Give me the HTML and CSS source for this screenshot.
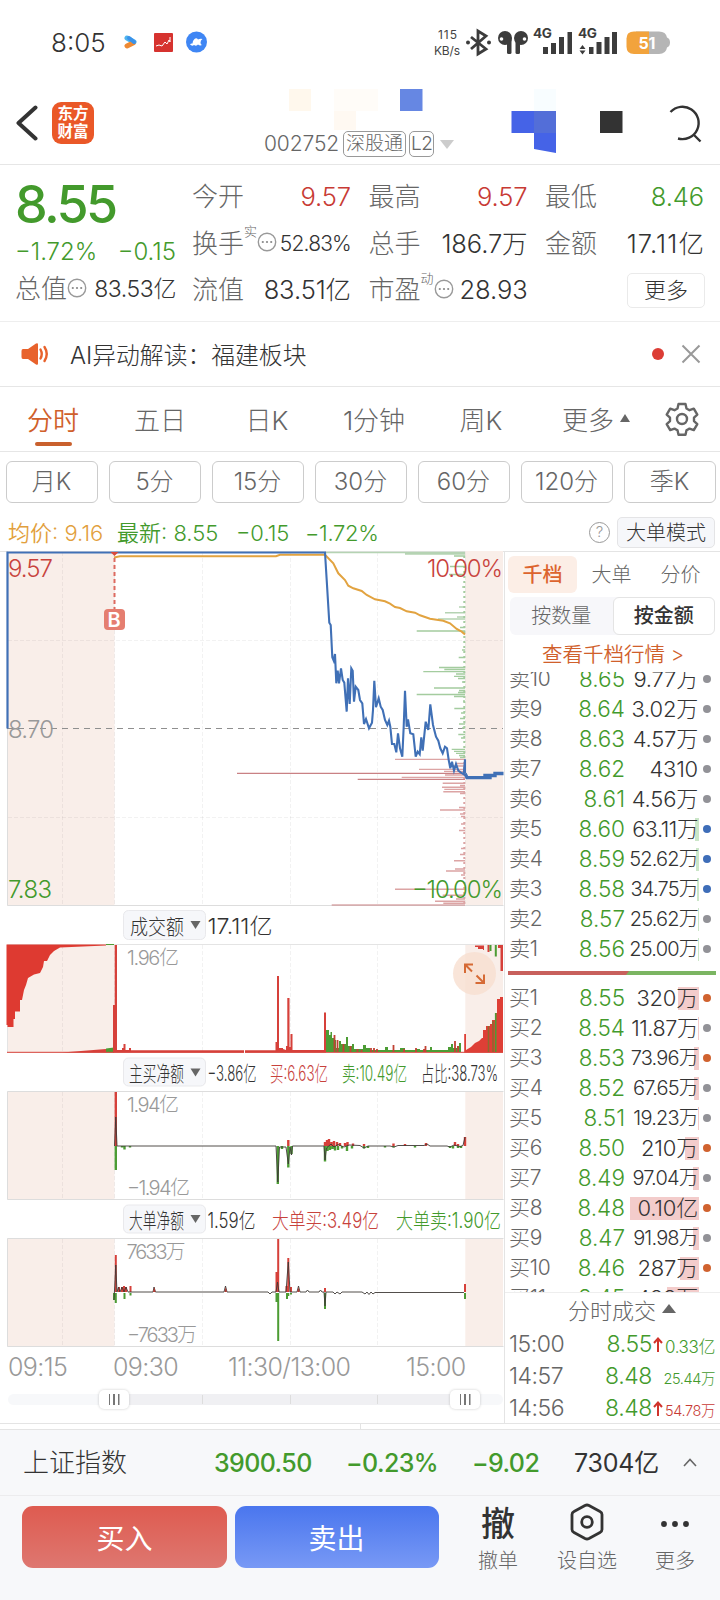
FILE: index.html
```
<!DOCTYPE html>
<html lang="zh-CN">
<head>
    <meta charset="UTF-8">
    <meta name="viewport" content="width=device-width, initial-scale=1.0">
    <title>002752 分时</title>
    <link rel="stylesheet" href="styles.css">
</head>
<body>
<div class="page">

    <div class="status-bar">
        <span class="clock">8:05</span>
        <svg class="status-left" width="90" height="24" viewBox="120 30 90 24">
            <path d="M127 38l7 4" stroke="#4fb4ee" stroke-width="5" stroke-linecap="round"/>
            <path d="M127 46l6-3" stroke="#ee8a34" stroke-width="5" stroke-linecap="round"/>
            <path d="M129 38l5 4" stroke="#3a92ea" stroke-width="4" stroke-linecap="round"/>
            <rect x="154" y="33" width="19" height="19" rx="1" fill="#d6332f"/>
            <path d="M156 46l3-1 3 1 3-4 2 2 2-4 1 2V37" fill="none" stroke="#fff" stroke-width="1"/>
            <circle cx="196.500" cy="42" r="10.500" fill="#3f86f4"/>
            <path d="M190 44.500q1-1.500 2.500-1 0-3 2-4.500 2-1.500 3.500.5 2-1 4.500-.5-2 1-2 3.500 0 2 1.500 2.500-2 1-4-.5-1.500 2-4 .5-2 1.500-4-.5z" fill="#fff"/>
        </svg>
        <svg class="status-right" width="240" height="34" viewBox="430 24 240 34">
            <g class="net-speed"><text x="438" y="38" textLength="19">115</text><text x="434" y="54" textLength="26">KB/s</text></g>
            <path d="M471 36l15 12-8 5V30l8 5-15 13" fill="none" stroke="#3c3c3c" stroke-width="2.800"/>
            <circle cx="468" cy="41.500" r="2" fill="#3c3c3c"/><circle cx="489" cy="41.500" r="2" fill="#3c3c3c"/>
            <g fill="#3c3c3c">
                <circle cx="505" cy="37" r="7"/><rect x="507" y="36" width="4.500" height="17" rx="1.500"/>
                <circle cx="521" cy="37" r="7"/><rect x="515.500" y="36" width="4.500" height="17" rx="1.500"/>
                <rect x="543" y="46" width="5" height="7"/><rect x="551" y="42" width="5" height="11"/><rect x="559" y="36" width="5" height="17"/><rect x="567.500" y="31" width="4.500" height="22"/>
                <path d="M579.500 48l3-4 3 4zM579.500 49.500l3 4 3-4z"/>
                <rect x="589" y="46" width="4.500" height="7"/><rect x="596.500" y="41" width="5" height="12"/><rect x="604.500" y="36" width="5" height="17"/><rect x="612" y="31" width="5" height="22"/>
            </g>
            <circle cx="501.500" cy="38" r="1.800" fill="#fff"/><circle cx="524.500" cy="38" r="1.800" fill="#fff"/>
            <g class="net-type"><text x="533" y="37" textLength="19">4G</text><text x="578" y="37" textLength="19">4G</text></g>
            <path d="M636 30.500h23q7 0 8 6 3 1 3 5t-3 5q-1 6.500-8 6.500h-23z" fill="#b5b5b5"/>
            <path d="M649 30.500h-15q-7.500 0-7.500 7v8q0 7.500 7.500 7.500h15z" fill="#f2a33c"/>
            <text class="battery" x="638.500" y="48" textLength="17">51</text>
        </svg>
    </div>

    <div class="top-bar">
        <svg class="back" width="24" height="36" viewBox="0 0 24 36"><path d="M20.500 2.500L3.500 18l17 15.500" fill="none" stroke="#333" stroke-width="4" stroke-linecap="round" stroke-linejoin="round"/></svg>
        <div class="logo">东方<br>财富</div>
        <!-- masked name and toolbar blocks -->
        <svg class="mosaic" width="360" height="70" viewBox="280 85 360 70">
            <rect x="289" y="89" width="22" height="22" fill="#fff8ed"/>
            <rect x="334" y="89" width="44" height="22" fill="#fffcf8"/>
            <rect x="334" y="111" width="22" height="19" fill="#fff9f2"/>
            <rect x="534" y="89" width="22" height="22" fill="#f8fdff"/>
            <rect x="400" y="89" width="22.500" height="22" fill="#6687e3"/>
            <rect x="511.500" y="111" width="22.500" height="22" fill="#4563e7"/>
            <rect x="534" y="111" width="22" height="22" fill="#536ed8"/>
            <path d="M534 133h22v20l-22-4z" fill="#4563e7"/>
            <rect x="600" y="111" width="22.500" height="22" fill="#333"/>
        </svg>
        <div class="stock-code">
            <span>002752</span><span class="tag">深股通</span><span class="tag l2">L2</span>
            <svg width="14" height="9" viewBox="0 0 14 9"><path d="M0 0h14L7 9z" fill="#ccc"/></svg>
        </div>
        <svg class="search" width="36" height="40" viewBox="666 101 36 40"><path d="M670.500 110a16.200 16.200 0 1 1 7.500 26.500M693 132l7.500 7.500" fill="none" stroke="#333" stroke-width="2.400"/></svg>
    </div>

    <div class="quote">
        <div class="quote-main">
            <div class="last">8.55</div>
            <div class="change"><span>−1.72%</span><span>−0.15</span></div>
            <div class="cell"><i>总值</i><svg class="dots" viewBox="0 0 20 20"><use href="#more-dots"/></svg><b class="small cap">83.53亿</b></div>
        </div>
        <div class="quote-grid">
            <div class="cell"><i>今开</i><b class="red">9.57</b></div>
            <div class="cell"><i>最高</i><b class="red">9.57</b></div>
            <div class="cell"><i>最低</i><b class="green">8.46</b></div>
            <div class="cell"><i>换手</i><sup>实</sup><svg class="dots" viewBox="0 0 20 20"><use href="#more-dots"/></svg><b class="small">52.83%</b></div>
            <div class="cell"><i>总手</i><b>186.7万</b></div>
            <div class="cell"><i>金额</i><b class="wide">17.11亿</b></div>
            <div class="cell"><i>流值</i><b>83.51亿</b></div>
            <div class="cell"><i>市盈</i><sup>动</sup><svg class="dots" viewBox="0 0 20 20"><use href="#more-dots"/></svg><b>28.93</b></div>
            <div class="cell"><button class="more-btn">更多</button></div>
        </div>
    </div>

    <div class="notice">
        <svg width="30" height="24" viewBox="0 0 30 24">
            <path d="M2 7h5l8-5.500q2-1 2 1v19q0 2-2 1L7 17H2q-1.500 0-1.500-2V9q0-2 1.500-2z" fill="#e8622c"/>
            <path d="M19.500 7.500q2.500 4.500 0 9M23.500 5q4.500 7 0 14" fill="none" stroke="#e8622c" stroke-width="2.400" stroke-linecap="round"/>
        </svg>
        <span class="notice-text">AI异动解读：福建板块</span>
        <span class="red-dot"></span>
        <svg width="20" height="20" viewBox="0 0 20 20"><path d="M1.500 1.500l17 17M18.500 1.500l-17 17" stroke="#999" stroke-width="2"/></svg>
    </div>

    <div class="tabs">
        <span class="tab active">分时</span>
        <span class="tab">五日</span>
        <span class="tab">日K</span>
        <span class="tab">1分钟</span>
        <span class="tab">周K</span>
        <span class="tab">更多<svg width="10" height="8" viewBox="0 0 10 8"><path d="M0 8h10L5 0z" fill="#666"/></svg></span>
        <span class="gear">
            <svg width="34" height="34" viewBox="0 0 34 34" fill="none" stroke="#666" stroke-width="2.400" stroke-linejoin="round">
                <path d="M13.500 2h7l1 4.500 3 1.700 4.300-1.500 3.500 6-3.300 3v3.400l3.300 3-3.500 6-4.300-1.500-3 1.700-1 4.500h-7l-1-4.500-3-1.700-4.300 1.500-3.500-6 3.300-3v-3.400l-3.300-3 3.500-6L9.500 8.200l3-1.700z"/>
                <circle cx="17" cy="17" r="5"/>
            </svg>
        </span>
    </div>

    <div class="periods">
        <button>月K</button>
        <button>5分</button>
        <button>15分</button>
        <button>30分</button>
        <button>60分</button>
        <button>120分</button>
        <button>季K</button>
    </div>

    <div class="summary">
        <span class="avg">均价: 9.16</span>
        <span class="green now">最新: 8.55</span>
        <span class="green d1">−0.15</span>
        <span class="green d2">−1.72%</span>
        <span class="help">?</span>
        <button class="mode-btn">大单模式</button>
    </div>

    <div class="content">
        <div class="charts">

            <!-- price -->
            <svg width="504" height="355" viewBox="0 551 504 355">
                <path d="M7.500 551H114.500V906H7.500zM465.300 551H503V906H465.300z" fill="#f9eee9"/>
                <path class="grid" d="M62.500 552V905M114.500 552V905M202.500 552V905M290.500 552V905M377.500 552V905M465.500 552V905M8 640.500H503M8 817.500H503"/>
                <path d="M7.500 551V905.500H503.500" fill="none" stroke="#ddd"/>
                <path d="M7 728.500H503" stroke="#8f8f8f" stroke-dasharray="6 5"/>
                <text class="up-text" font-size="24" x="8" y="577" textLength="45">9.57</text>
                <text class="gray" font-size="24" x="8" y="738" textLength="46">8.70</text>
                <text class="down-text" font-size="24" x="8" y="898" textLength="44">7.83</text>
                <path d="M325 552.500H465M405 554H465M445 612.700H465M438 619H465M457 617H465M459 607H465M462 587H465" stroke="#b5d3b3" stroke-width="1.500"/>
                <path d="M454 556H465M450 566.500H465M449 574.500H465M416.700 631H465M460 627.500H465M462 650H465M458.700 657.500H465M439 667.500H465M444.300 669.500H465M423.300 671.700H465M456 674H465M454 676.300H465M458 678.500H465M462 682H465M434 688H465M459 690.500H465M458 692.500H465M416.700 694.500H465M454 696.500H465M463 701H465M454.300 708.500H465M461 713H465M460 718.500H465M459 724H465M462 728H465M458.300 734.500H465M461 738H465M451.700 749.300H465M454 751.300H465M456 753.300H465M459 755.500H465M460 757.500H465" stroke="#a4cc9f" stroke-width="1.300"/>
                <path d="M464.300 556V759" stroke="#a4cc9f" stroke-width="2" stroke-dasharray="2 3"/>
                <path d="M395 759.400H465M455 763.500H465M449 766H465M419 769.400H465M444 771.400H465M445 775H465M401.700 777.400H465M442.700 783.300H465M460 785.500H465M442 787.300H465M444.300 789.400H465M443.300 791.700H465M460 793.500H465M459 807.500H465M440 810H465M460 814H465M461 816.500H465M461 824H465M459 830.500H465M461 848.500H465M460 854.500H465M454 860.700H465M455 869H465M446 871H465M461 875H465M395 889.300H465M442.700 895.300H465M456 899H465M435 901.300H465M443.300 903.300H465" stroke="#dca4a4" stroke-width="1.400"/>
                <path d="M464.300 762V905" stroke="#dca4a4" stroke-width="2" stroke-dasharray="2 3"/>
                <path d="M237 773.400H465M357.700 779.400H465M331.700 905H465" stroke="#c98184" stroke-width="1.200"/>
                <path d="M114 557.500L120 556.300L276 556.300L280 554.700H325L333.300 563.300L338.300 573.300L345 580L348.300 585.700L353.300 588.300L361.700 591L366.700 595L375 599.300L385 601.300L390 603.700L395 607L400 608L406.700 611.300L415 612.700L420 615.300L430 618.700L443.300 620.700L450 623.300L456.700 629L461.700 631.700L465 634.500" fill="none" stroke="#e2a340" stroke-width="2"/>
                <path d="M114 552.500H325L326.700 580L329.300 622.700L330.700 625L332.300 657.300L333.700 660.700L335 654L336.300 683.300L337.700 670.700L339 683.300L341 668.300L342.700 680L344.300 682.700L346.700 711.700L348 678.300L349.700 704L351.300 668.300L352.700 670.700L354 701.700L355.700 686.700L358.300 690L360 700L362.300 703.300L364 724L366 719L369 728.300L372 722.700L373 710L374.300 680.700L376 707.300L378.700 698.300L380.700 706.700L382.700 710L385 720L387.300 725L389 720.700L390.300 726.700L392 744H394.300L396.300 752.300L398 733.300L400 748.300L402.300 756.700L403.700 726.700L405 690.700L406.700 726.700L408 719.300L410.300 733.300L413.300 734.300L415.700 756.700L417.700 751.700L419.700 754.300L421.300 737.300L422.700 750.700L425.700 721.700L428.300 730L430.300 704.300L433 725L436 736.700L438.300 740.700L440.300 748.300L442.700 753.300L445 746.700L447 748.300L448.700 760L450.300 768.300L452 761.700L454 770.700L456 764L458.300 770.700L461 772.700L463.700 774.300L465 759.300V773.300" fill="none" stroke="#4070b6" stroke-width="2.100"/>
                <path d="M7.500 728.500V552.500H114" fill="none" stroke="#4070b6" stroke-width="2.200"/>
                <path d="M465 773.500L467 777.600H485V775.500H487V777.600H490V775.500H495V773.500H503.500" fill="none" stroke="#4070b6" stroke-width="3.400"/>
                <path d="M110.500 552h8l-4 4z" fill="#d84a3c"/>
                <path d="M114.500 558V609" stroke="#dd6a60" stroke-width="2" stroke-dasharray="4 3"/>
                <rect x="104" y="609" width="21" height="21" rx="4" fill="#e57e70"/>
                <text class="mark" x="107.500" y="626.500" textLength="14">B</text>
                <text class="up-text" font-size="24" x="427" y="577" textLength="76">10.00%</text>
                <text class="down-text" font-size="24" x="412" y="898" textLength="91">−10.00%</text>
            </svg>

            <!-- turnover -->
            <svg width="504" height="147" viewBox="0 906 504 147">
                <rect class="picker" x="123.500" y="910.500" width="82" height="29" rx="5"/>
                <text x="130" y="934" font-size="21" textLength="54" lengthAdjust="spacingAndGlyphs">成交额</text>
                <path d="M190.500 921h10l-5 8z" fill="#666"/>
                <text x="207.500" y="934" font-size="22" textLength="65" lengthAdjust="spacingAndGlyphs">17.11亿</text>
                <path d="M7.500 944H114.500V1053H7.500zM465.300 944H503V1053H465.300z" fill="#f9eee9"/>
                <path class="grid" d="M62.500 945V1052M114.500 945V1052M202.500 945V1052M290.500 945V1052M377.500 945V1052"/>
                <path d="M7.500 1052.500V944.500H503.500" fill="none" stroke="#e4e4e4"/>
                <path d="M6.500 944.500H106V945.500L60 947.500L54 951L50 955L47 961H44L43 967L40 973L34 974.500L28 978L26 985L24 990L22 1000H20V1011.500H15V1019H13.500V1027H7.500V1025H6.500z" fill="#de3a31"/>
                <path d="M106 944.500H114" stroke="#4c9c34"/>
                <path d="M62 1052.500L106 1049V1052.500z" fill="#d6403a"/>
                <path d="M106 1048.500L114 1047.500V1052.500H106z" fill="#4c9c34"/>
                <path d="M7 1052.300H503" stroke="#d6403a"/>
                <path d="M113 1005H114.700V945H117V1050H122V1048H123.500V1044H125.500V1050H129V1048H131V1050.200H275.500V1042H277V976H279V1048H283V1049L286 1050V1046H287.300V998H289.500V1047H290.500V1034H292.500V1050H324V1012.500H326V1052.500H113z" fill="#d6403a"/>
                <path d="M244.500 1049V1053" stroke="#fff"/>
                <path d="M326 1030H329V1035H330.500V1032H332V1038H334V1040H336V1048H339V1041H341V1044H346V1037H348V1046H352V1044H354V1049H363V1045H366V1048H370V1050H385V1047H388V1050H400V1048H405V1050H416V1049H420V1050H430V1047H432V1050H448V1047H451V1044H453V1048H457V1046H459V1043H461V1052H326z" fill="#4c9c34"/>
                <path d="M334.500 1035V1052M337.500 1040V1052M343.500 1044V1052M350.500 1046V1052M357.500 1049V1052M361.500 1050V1052M371 1048V1052M374 1048V1052M377 1049V1052M393.500 1045V1052M404 1049V1052M416 1048V1052M424 1049V1052M425.500 1046V1052M455 1041V1052M458 1046V1052" stroke="#c14234" stroke-width="1.800"/>
                <path d="M464.200 1034H466V1050L471 1047L475 1043L479 1041L482 1038H483V1030H486V1026H490V1024H492V1020H495V1013H497V999H500V997H503V1052.500H464.200z" fill="#de3f36"/>
                <path d="M495.700 1013V1052" stroke="#4c9c34" stroke-width="1.600"/>
                <path d="M488.500 1026V1052M493 1021V1052" stroke="#8d6a2d" stroke-width="1.500"/>
                <path d="M471 945.500H475V947H478V949H483V950H484V945.500M487.500 945H489.500V952H487.500zM500.500 945H503V971H500.500zM498 945H503V948H498z" fill="#d6403a"/>
                <path d="M490.500 945V951M495.800 945V956.500" stroke="#4c9c34" stroke-width="2"/>
                <text class="gray" font-size="20" x="127" y="964.500" textLength="52">1.96亿</text>
                <circle cx="474.500" cy="973.400" r="21.500" fill="#f8dfd0" opacity=".8"/>
                <path d="M465 973V964.500H473M465 964.500L472 971.500M484 974.500V983H475.500M484 983L476.500 975.500" fill="none" stroke="#d66a35" stroke-width="2"/>
            </svg>

            <!-- net active buying -->
            <svg width="504" height="147" viewBox="0 1053 504 147">
                <rect class="picker" x="123.500" y="1058" width="82" height="28" rx="5"/>
                <text x="129" y="1081" font-size="21" textLength="55" lengthAdjust="spacingAndGlyphs">主买净额</text>
                <path d="M190.500 1068.500h10l-5 8z" fill="#666"/>
                <text x="207.500" y="1081" font-size="21" textLength="49" lengthAdjust="spacingAndGlyphs">−3.86亿</text>
                <text class="up-text" x="270" y="1081" font-size="21" textLength="58" lengthAdjust="spacingAndGlyphs">买:6.63亿</text>
                <text class="down-text" x="342" y="1081" font-size="21" textLength="65" lengthAdjust="spacingAndGlyphs">卖:10.49亿</text>
                <text x="421" y="1081" font-size="21" textLength="77" lengthAdjust="spacingAndGlyphs">占比:38.73%</text>
                <path d="M7.500 1091H114.500V1200H7.500zM465.300 1091H503V1200H465.300z" fill="#f9eee9"/>
                <path class="grid" d="M62.500 1092V1199M114.500 1092V1199M202.500 1092V1199M290.500 1092V1199M377.500 1092V1199"/>
                <path d="M503.500 1091.500H7.500V1199.500H503.500" fill="none" stroke="#ddd"/>
                <path d="M115.800 1092V1146M288.300 1140V1146M325 1142V1146M327 1140V1146M329 1139V1146M331.500 1142V1146M334 1141V1146M337 1142V1146M340 1143V1146M345 1143V1146M347.500 1142V1146M353 1143.500V1146M364 1144V1146M393.500 1143.500V1146M405 1144V1146M426 1143V1146M455 1142V1146M458 1144V1146M465 1137V1146" stroke="#d6403a" stroke-width="2.400"/>
                <path d="M115.800 1146V1170M122 1146V1147.500M124.500 1146V1149.500M130 1146V1147.500M277.800 1146V1184M282 1146V1149M288.300 1146V1167.500M291.500 1146V1154M325 1146V1161.500M327.500 1146V1151M330 1146V1150M332.500 1146V1149M335 1146V1150.500M338 1146V1150M342 1146V1148.500M347 1146V1151M352 1146V1148.500M364 1146V1148.500M368 1146V1148M385 1146V1147.500M393.500 1146V1147.500M415 1146V1147.500M450 1146V1148M453 1146V1148.500M458 1146V1148M461 1146V1148" stroke="#4c9c34" stroke-width="2.400"/>
                <path d="M114.500 1146L115.800 1117L117 1146H276L277.800 1182L279.500 1147H286L288.300 1164L290 1147L291.500 1155L292.500 1146H324L325 1160L326.500 1148L331 1144L334 1147L338 1144.500L344 1147L349 1145L360 1145.500L364 1148L368 1146H390L394 1147L398 1145.500H424L427 1144L430 1146H447L450 1147L454 1145L460 1146.500L463 1145.500L465 1137" fill="none" stroke="#3e3a37" stroke-width=".9"/>
                <text class="gray" font-size="20" x="127" y="1112" textLength="52">1.94亿</text>
                <text class="gray" font-size="20" x="127" y="1195" textLength="63">−1.94亿</text>
            </svg>

            <!-- net big orders -->
            <svg width="504" height="148" viewBox="0 1200 504 148">
                <rect class="picker" x="123.500" y="1205" width="82" height="28" rx="5"/>
                <text x="129" y="1228" font-size="21" textLength="55" lengthAdjust="spacingAndGlyphs">大单净额</text>
                <path d="M190.500 1215h10l-5 8z" fill="#666"/>
                <text x="207.500" y="1228" font-size="21" textLength="48" lengthAdjust="spacingAndGlyphs">1.59亿</text>
                <text class="up-text" x="272" y="1228" font-size="21" textLength="107" lengthAdjust="spacingAndGlyphs">大单买:3.49亿</text>
                <text class="down-text" x="396" y="1228" font-size="21" textLength="105" lengthAdjust="spacingAndGlyphs">大单卖:1.90亿</text>
                <path d="M7.500 1238H114.500V1347H7.500zM465.300 1238H503V1347H465.300z" fill="#f9eee9"/>
                <path class="grid" d="M62.500 1239V1346M114.500 1239V1346M202.500 1239V1346M290.500 1239V1346M377.500 1239V1346"/>
                <path d="M503.500 1238.500H7.500V1346.500H503.500" fill="none" stroke="#ddd"/>
                <path d="M115.800 1255V1292M119 1287V1292M122 1287V1292M124 1286V1292M126 1287V1292M130.500 1286V1292M276.500 1272V1292M278.200 1239V1292M286.500 1286V1292M288.300 1258V1292M291 1287V1292M325 1288V1292M465 1284V1292" stroke="#d6403a" stroke-width="2"/>
                <path d="M114 1293V1300M115.800 1293V1303M124.500 1293V1299M130.500 1293V1295.500M276.500 1293V1302M278.200 1293V1341M287 1293V1299M288.300 1293V1296M291 1293V1294.500M325 1293V1309M465 1293V1299" stroke="#4c9c34" stroke-width="2"/>
                <path d="M114 1300L115.800 1265L117 1292L118.500 1287L120 1292L122 1287L124 1292L126 1287L128 1292H153L154 1287L155.500 1292H224L225.500 1286L227 1292H268L270 1294L272 1292H276L277.500 1282L279 1292H286L288.300 1262L290 1292H297L298.500 1286L300 1292H306L307.500 1290L309 1292H319L320.500 1290L322 1292H324L325 1306L326 1292H333L335 1294L337 1292L340 1294L342 1292H362L365 1294L367 1292L369 1294.500L371 1292L373 1294L375 1292.500H464" fill="none" stroke="#3e3a37" stroke-width=".9"/>
                <path d="M153 1292l1.300-5 1.300 5zM224.500 1292l1.200-5 1.200 5zM297.300 1292l1.200-5 1.200 5z" fill="#b23a33"/>
                <text class="gray" font-size="20" x="126.500" y="1259" textLength="59">7633万</text>
                <text class="gray" font-size="20" x="127" y="1341.500" textLength="70">−7633万</text>
            </svg>

            <div class="time-axis">
                <span>09:15</span><span>09:30</span><span>11:30/13:00</span><span>15:00</span>
            </div>
            <div class="range">
                <span class="handle"></span>
                <span class="tick t1"></span><span class="tick t2"></span><span class="tick t3"></span>
                <span class="handle"></span>
            </div>
        </div>

        <div class="side">
            <div class="side-tabs"><span class="on">千档</span><span>大单</span><span>分价</span></div>
            <div class="segment"><span>按数量</span><span class="on">按金额</span></div>
            <div class="depth-link">查看千档行情 &gt;</div>

            <div class="book sell">
                <div class="row"><i>卖10</i><b>8.65</b><em>9.77万</em><u></u></div>
                <div class="row"><i>卖9</i><b>8.64</b><em>3.02万</em><u></u></div>
                <div class="row"><i>卖8</i><b>8.63</b><em>4.57万</em><u></u></div>
                <div class="row"><i>卖7</i><b>8.62</b><em>4310</em><u></u></div>
                <div class="row"><i>卖6</i><b>8.61</b><em>4.56万</em><u></u></div>
                <div class="row"><i>卖5</i><b>8.60</b><em class="mid" style="--w: 4px">63.11万</em><u class="blue"></u></div>
                <div class="row"><i>卖4</i><b>8.59</b><em class="long" style="--w: 3px">52.62万</em><u class="blue"></u></div>
                <div class="row"><i>卖3</i><b>8.58</b><em class="long" style="--w: 2px">34.75万</em><u class="blue"></u></div>
                <div class="row"><i>卖2</i><b>8.57</b><em class="long" style="--w: 1px">25.62万</em><u></u></div>
                <div class="row"><i>卖1</i><b>8.56</b><em class="long" style="--w: 1px">25.00万</em><u></u></div>
            </div>
            <div class="ratio"><span></span></div>
            <div class="book buy">
                <div class="row"><i>买1</i><b>8.55</b><em style="--w: 21px">320万</em><u class="orange"></u></div>
                <div class="row"><i>买2</i><b>8.54</b><em class="mid" style="--w: 1px">11.87万</em><u></u></div>
                <div class="row"><i>买3</i><b>8.53</b><em class="long" style="--w: 5px">73.96万</em><u class="orange"></u></div>
                <div class="row"><i>买4</i><b>8.52</b><em class="long" style="--w: 5px">67.65万</em><u></u></div>
                <div class="row"><i>买5</i><b>8.51</b><em class="long" style="--w: 1px">19.23万</em><u></u></div>
                <div class="row"><i>买6</i><b>8.50</b><em style="--w: 14px">210万</em><u class="orange"></u></div>
                <div class="row"><i>买7</i><b>8.49</b><em class="long" style="--w: 6px">97.04万</em><u></u></div>
                <div class="row"><i>买8</i><b>8.48</b><em style="--w: 69px">0.10亿</em><u class="orange"></u></div>
                <div class="row"><i>买9</i><b>8.47</b><em class="long" style="--w: 6px">91.98万</em><u></u></div>
                <div class="row"><i>买10</i><b>8.46</b><em style="--w: 19px">287万</em><u class="orange"></u></div>
                <div class="row"><i>买11</i><b>8.45</b><em style="--w: 32px">483万</em><u></u></div>
            </div>

            <div class="trades">
                <div class="trades-title">分时成交<svg width="14" height="9" viewBox="0 0 14 9"><path d="M0 9h14L7 0z" fill="#666"/></svg></div>
                <div class="trade"><i>15:00</i><b>8.55</b><svg width="10" height="15" viewBox="0 0 10 15"><use href="#arrow-up"/></svg><em class="green big">0.33亿</em></div>
                <div class="trade"><i>14:57</i><b>8.48</b><span></span><em class="green">25.44万</em></div>
                <div class="trade"><i>14:56</i><b>8.48</b><svg width="10" height="15" viewBox="0 0 10 15"><use href="#arrow-up"/></svg><em class="red">54.78万</em></div>
            </div>
        </div>
    </div>

    <div class="sheet-edge"></div>

    <div class="index-bar">
        <span class="index-name">上证指数</span>
        <span class="green v1">3900.50</span>
        <span class="green v2">−0.23%</span>
        <span class="green v3">−9.02</span>
        <span class="v4">7304亿</span>
        <svg width="14" height="9" viewBox="0 0 14 9"><path d="M1 8l6-6.500L13 8" fill="none" stroke="#666" stroke-width="1.600"/></svg>
    </div>

    <div class="actions">
        <button class="buy-btn">买入</button>
        <button class="sell-btn">卖出</button>
        <div class="action a1"><strong>撤</strong><span>撤单</span></div>
        <div class="action a2">
            <svg width="36" height="38" viewBox="0 0 36 38" fill="none" stroke="#333" stroke-width="2.800" stroke-linejoin="round"><path d="M16 2.500q2-1 4 0l11 6q2 1 2 3v15q0 2-2 3l-11 6q-2 1-4 0l-11-6q-2-1-2-3v-15q0-2 2-3z"/><circle cx="18" cy="19" r="5.300"/></svg>
            <span>设自选</span>
        </div>
        <div class="action a3">
            <svg width="30" height="38" viewBox="0 0 30 38" fill="#333"><circle cx="4" cy="21" r="2.900"/><circle cx="15" cy="21" r="2.900"/><circle cx="26" cy="21" r="2.900"/></svg>
            <span>更多</span>
        </div>
    </div>
</div>

<svg class="defs" width="0" height="0">
    <defs>
        <g id="more-dots"><circle cx="10" cy="10" r="8.700" fill="none" stroke="#999" stroke-width="1.400"/><circle cx="5.800" cy="10" r="1.100" fill="#888"/><circle cx="10" cy="10" r="1.100" fill="#888"/><circle cx="14.200" cy="10" r="1.100" fill="#888"/></g>
        <g id="arrow-up"><path d="M5 15V2M1 6l4-4.500L9 6" fill="none" stroke="#d0332c" stroke-width="2"/></g>
    </defs>
</svg>
</body>
</html>
```
FILE: styles.css
```
* {
    box-sizing: border-box;
}

body {
    margin: 0;
    background: #fff;
    color: #333;
    font-family: Inter, "Noto Sans CJK SC", sans-serif;
    font-weight: 300;
}

i, em, u {
    font-style: normal;
    text-decoration: none;
}

b {
    font-weight: inherit;
}

button {
    font: inherit;
    color: inherit;
    padding: 0;
}

svg {
    display: block;
    flex: none;
}

.defs {
    position: absolute;
}

.page {
    width: 720px;
    height: 1600px;
    overflow: hidden;
}

.red {
    color: #c83a34;
}

.green {
    color: #439a2c;
}

/* status bar */
.status-bar {
    display: flex;
    align-items: center;
    height: 84px;
    padding-left: 51px;
}

.clock {
    width: 69px;
    font-size: 26px;
    letter-spacing: 0;
    white-space: nowrap;
}

.status-right {
    margin-left: 220px;
}

.net-speed {
    font-size: 12px;
    font-weight: 400;
    fill: #444;
}

.net-type {
    font-size: 13.5px;
    font-weight: 700;
    fill: #3c3c3c;
}

.battery {
    font-size: 16px;
    font-weight: 700;
    fill: #fff;
}

/* top bar */
.top-bar {
    position: relative;
    display: flex;
    align-items: center;
    height: 81px;
    padding: 0 18px 3px 15px;
    border-bottom: 1px solid #e6e6e6;
}

.logo {
    width: 42px;
    height: 42px;
    margin-left: 13px;
    padding-top: 3px;
    border-radius: 9px;
    background: #ea5828;
    color: #fff;
    font-size: 15.5px;
    font-weight: 700;
    line-height: 18px;
    text-align: center;
}

.mosaic {
    position: absolute;
    left: 280px;
    top: 1px;
}

.stock-code {
    position: absolute;
    left: 264px;
    top: 47px;
    display: flex;
    align-items: center;
    color: #666;
    font-size: 21px;
    line-height: 26px;
}

.stock-code span:first-child {
    width: 79px;
    letter-spacing: -0.1px;
}

.stock-code .tag {
    height: 26px;
    margin-right: 3px;
    padding: 0 2px;
    border: 1px solid #999;
    border-radius: 5px;
    font-size: 19px;
    line-height: 24px;
}

.stock-code .l2 {
    width: 25px;
    padding: 0 1px;
    letter-spacing: -0.5px;
}

.stock-code .tag + svg {
    margin-left: 3px;
}

.search {
    margin-left: auto;
}

/* quote */
.quote {
    display: flex;
    height: 157px;
    padding: 9px 16px 0 15px;
    border-bottom: 1px solid #eee;
}

.quote-main {
    width: 161px;
    margin-right: 16px;
    color: #439a2c;
}

.last {
    height: 58px;
    font-size: 52px;
    font-weight: 500;
    line-height: 62px;
    letter-spacing: -2.6px;
}

.change {
    display: flex;
    justify-content: space-between;
    height: 34px;
    font-size: 24px;
    line-height: 40px;
    white-space: nowrap;
}

.quote-grid {
    display: grid;
    grid-template-columns: repeat(3, 159px);
    grid-template-rows: repeat(3, 46.5px);
    column-gap: 17.5px;
}

.cell {
    display: flex;
    align-items: center;
    height: 46px;
    color: #333;
    white-space: nowrap;
}

.cell i {
    color: #666;
    font-size: 26px;
    line-height: 36px;
}

.cell b {
    margin-left: auto;
    font-size: 25.5px;
    line-height: 36px;
    letter-spacing: -0.1px;
}

.cell b.wide {
    letter-spacing: 1.1px;
    margin-right: -1px;
}

.cell b.small {
    font-size: 21px;
    letter-spacing: -0.8px;
}

.cell b.cap {
    font-size: 23px;
    letter-spacing: -0.4px;
}

.cell sup {
    color: #666;
    font-size: 13px;
    line-height: 13px;
    transform: translateY(-12px);
}

.dots {
    width: 20px;
    height: 20px;
    margin-top: -3px;
}

.more-btn {
    width: 78px;
    height: 35px;
    margin: 0 -1px 0 auto;
    border: 1px solid #eaeaea;
    border-radius: 5px;
    background: #fff;
    font-size: 22px;
    line-height: 33px;
}

/* notice */
.notice {
    display: flex;
    align-items: center;
    height: 65px;
    padding: 0 19px 0 21px;
    border-bottom: 1px solid #e6e6e6;
}

.notice-text {
    margin-left: 19px;
    padding-bottom: 2px;
    font-size: 23.8px;
}

.red-dot {
    width: 12px;
    height: 12px;
    margin: 0 17px 0 auto;
    border-radius: 50%;
    background: #dc3d35;
}

/* tabs */
.tabs {
    display: flex;
    align-items: center;
    height: 65px;
    border-bottom: 1px solid #e6e6e6;
    color: #666;
    font-size: 26px;
}

.tab {
    display: flex;
    align-items: center;
    justify-content: center;
    width: 107px;
    height: 64px;
    padding-right: 1px;
    padding-bottom: 2px;
}

.tab svg {
    margin: 0 -16px 0 6px;
}

.tab.active {
    position: relative;
    color: #d0602b;
    font-weight: 350;
}

.tab.active::after {
    content: "";
    position: absolute;
    left: 35px;
    bottom: 5px;
    width: 37px;
    height: 4px;
    border-radius: 2px;
    background: #c9602d;
}

.gear {
    margin-left: 23px;
}

.periods {
    display: flex;
    gap: 11px;
    padding: 9px 5px 0 5.5px;
}

.periods button {
    flex: none;
    width: 92px;
    height: 42px;
    border: 1px solid #ccc;
    border-radius: 6px;
    background: #fff;
    color: #666;
    font-size: 24px;
    line-height: 40px;
}

/* summary line */
.summary {
    display: flex;
    align-items: center;
    height: 48px;
    padding: 11px 5px 0 8px;
    font-size: 22px;
    line-height: 30px;
    white-space: nowrap;
}

.summary .green, .avg {
    font-weight: 350;
}

.avg {
    width: 109px;
    color: #e2a03d;
}

.now {
    width: 106px;
}

.d1 {
    width: 54px;
    margin: 0 15px 0 13px;
}

.d2 {
    width: 71px;
    letter-spacing: -0.3px;
}

.help {
    width: 21px;
    height: 21px;
    margin-left: auto;
    border: 1.5px solid #999;
    border-radius: 50%;
    color: #999;
    font-size: 15px;
    line-height: 18px;
    text-align: center;
}

.mode-btn {
    width: 98px;
    height: 31px;
    margin-left: 7px;
    border: 1px solid #e4e4e6;
    border-radius: 5px;
    background: #f6f7fa;
    font-size: 20px;
    line-height: 28px;
}

/* charts */
.content {
    display: flex;
    height: 873px;
    border-top: 1px solid #e4e4e4;
    border-bottom: 1px solid #e4e4e4;
}

.charts {
    width: 505px;
    border-right: 1px solid #e4e4e4;
}

.charts > svg:first-child {
    margin-top: -1px;
}

.charts svg text {
    fill: #333;
}

.charts .grid {
    fill: none;
    stroke: #000;
    stroke-opacity: 0.05;
    stroke-dasharray: 4 2;
}

.charts .picker {
    fill: #f6f7fa;
    stroke: #e9e9ec;
}

.charts svg .gray {
    fill: #999;
}

.charts svg .up-text {
    fill: #c8423c;
}

.charts svg .down-text {
    fill: #439a2c;
}

.charts svg .mark {
    fill: #fff;
    font-size: 20px;
    font-weight: 600;
}

.time-axis {
    display: flex;
    height: 38px;
    color: #999;
    font-size: 25px;
    line-height: 38px;
    letter-spacing: -0.6px;
    white-space: nowrap;
}

.time-axis span:nth-child(1) {
    width: 105px;
    padding-left: 8px;
}

.time-axis span:nth-child(2) {
    width: 123px;
    padding-left: 8px;
}

.time-axis span:nth-child(3) {
    width: 178px;
}

.range {
    display: flex;
    align-items: center;
    width: 495px;
    height: 11px;
    margin: 8px 0 0 8px;
    padding-left: 91px;
    border-radius: 6px;
    background: linear-gradient(90deg, #f7f8fa 106px, #f0f0f3 106px, #f0f0f3 457px, #f7f8fa 457px);
}

.handle {
    width: 30px;
    height: 19px;
    border-radius: 5px;
    background: linear-gradient(90deg, #777 1.5px, transparent 1.5px 4.5px, #777 4.5px 6px, transparent 6px 9px, #777 9px) center / 10.5px 11px no-repeat #fff;
    box-shadow: 0 0 3px rgba(0, 0, 0, 0.2);
}

.tick {
    width: 1px;
    height: 9px;
    background: #ddd;
}

.t1 {
    margin-left: 73px;
}

.t2 {
    margin-left: 87px;
}

.t3 {
    margin: 0 72px 0 86px;
}

/* side panel */
.side {
    width: 215px;
}

.side-tabs {
    display: flex;
    height: 45px;
    padding: 4px 0 0 3px;
    color: #666;
    font-size: 20px;
    line-height: 39px;
    text-align: center;
}

.side-tabs span {
    width: 69px;
    height: 37px;
}

.side-tabs .on {
    border-radius: 6px;
    background: #fceee6;
    color: #dc642e;
    font-weight: 500;
}

.segment {
    display: flex;
    width: 205px;
    height: 38px;
    margin-left: 5px;
    border-radius: 6px;
    background: #f7f7fa;
    color: #666;
    font-size: 20px;
    line-height: 39px;
    text-align: center;
}

.segment span {
    width: 103px;
}

.segment .on {
    border: 1px solid #e4e4e4;
    border-radius: 6px;
    background: #fff;
    color: #333;
    font-weight: 500;
    line-height: 37px;
}

.depth-link {
    height: 37px;
    padding-left: 37px;
    color: #d0602b;
    font-size: 20.5px;
    line-height: 39px;
    white-space: nowrap;
    font-weight: 350;
}

.book {
    overflow: hidden;
}

.sell {
    height: 299px;
}

.sell .row:first-child {
    margin-top: -8px;
}

.buy {
    height: 317px;
    padding-top: 8px;
}

.row {
    display: flex;
    align-items: center;
    height: 30px;
    padding-left: 4px;
    white-space: nowrap;
}

.row i {
    width: 56px;
    color: #666;
    font-size: 21px;
    line-height: 26px;
    letter-spacing: -0.3px;
}

.row b {
    width: 60px;
    color: #439a2c;
    font-size: 22.5px;
    line-height: 26px;
    text-align: right;
}

.row em {
    width: 74px;
    height: 23px;
    padding-right: 1px;
    background: linear-gradient(#f3cccb, #f3cccb) right / var(--w, 0) 100% no-repeat;
    font-size: 22px;
    line-height: 23px;
    letter-spacing: -0.2px;
    text-align: right;
}

.row em.mid {
    font-size: 21.5px;
    letter-spacing: -0.4px;
}

.row em.long {
    font-size: 20px;
    letter-spacing: -0.8px;
}

.sell em {
    background-image: linear-gradient(#cbe6c8, #cbe6c8);
}

.row u {
    width: 8px;
    height: 8px;
    margin-left: 4px;
    border-radius: 50%;
    background: #929297;
}

.row u.blue {
    background: #3e6db8;
}

.row u.orange {
    background: #d0622f;
}

.ratio {
    height: 4px;
    margin: 0 4px 0 3px;
    background: #7bb562;
}

.ratio span {
    display: block;
    width: 121px;
    height: 4px;
    background: #c8605c;
    clip-path: polygon(0 0, 100% 0, 118px 100%, 0 100%);
}

.trades {
    border-top: 1px solid #eee;
}

.trades-title {
    display: flex;
    align-items: center;
    height: 35px;
    padding-left: 63px;
    color: #666;
    font-size: 22px;
    line-height: 30px;
}

.trades-title svg {
    margin-left: 6px;
    margin-top: -4px;
}

.trade {
    display: flex;
    align-items: center;
    height: 32px;
    padding-left: 4px;
    white-space: nowrap;
}

.trade i {
    width: 72px;
    color: #666;
    font-size: 23px;
    letter-spacing: -0.5px;
}

.trade b {
    width: 71px;
    margin-right: 1px;
    color: #439a2c;
    font-size: 23px;
    letter-spacing: -0.4px;
    text-align: right;
}

.trade em {
    margin-left: auto;
    margin-right: 5px;
    padding-top: 3px;
    font-size: 14.5px;
    letter-spacing: -0.4px;
}

.trade em.big {
    font-size: 17px;
}

/* bottom */
.sheet-edge {
    width: 361px;
    height: 5px;
    border-right: 1px solid #e4e4e4;
}

.index-bar {
    display: flex;
    align-items: center;
    height: 67px;
    padding-left: 23px;
    border-top: 1px solid #e4e4e4;
    border-bottom: 1px solid #ececee;
    background: #f7f8fa;
    font-size: 25px;
    font-weight: 400;
    line-height: 36px;
    letter-spacing: -0.6px;
    white-space: nowrap;
}

.index-bar .index-name {
    width: 191px;
    font-size: 26px;
    font-weight: 300;
    letter-spacing: 0;
}

.v1, .v2, .v3 {
    font-weight: 500;
}

.v1 {
    width: 132px;
}

.v2 {
    width: 126px;
}

.v3 {
    width: 102px;
}

.v4 {
    width: 109px;
    letter-spacing: -0.2px;
}

.actions {
    position: relative;
    display: flex;
    height: 104px;
    padding: 10px 0 0 22px;
    background: #f7f8fa;
}

.actions button {
    width: 205px;
    height: 62px;
    margin-right: 7.5px;
    border: 0;
    border-radius: 11px;
    color: #fff;
    font-size: 28px;
    font-weight: 400;
}

.actions .buy-btn {
    background: linear-gradient(#de5b50, #de7770);
}

.actions .sell-btn {
    width: 204px;
    background: linear-gradient(#4a76ee, #7899f5);
}

.action {
    display: flex;
    flex-direction: column;
    align-items: center;
    color: #666;
    font-size: 20px;
    line-height: 28px;
}

.action > :first-child {
    height: 38px;
    margin-top: -3px;
}

.action span {
    margin-top: 6px;
}

.action strong {
    color: #333;
    font-size: 34px;
    font-weight: 500;
    line-height: 42px;
}

.a1 {
    width: 60px;
    margin-left: 22px;
}

.a2 {
    width: 78px;
    margin-left: 20px;
}

.a3 {
    width: 60px;
    margin-left: 19px;
}
```
